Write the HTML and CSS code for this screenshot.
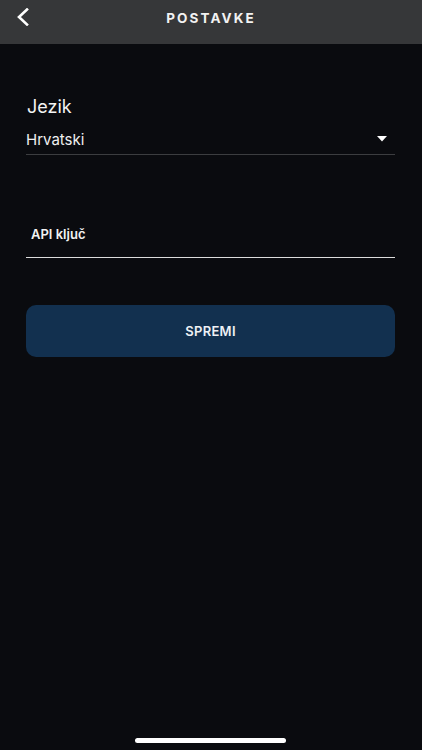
FILE: index.html
```html
<!DOCTYPE html>
<html lang="hr">
<head>
<meta charset="utf-8">
<title>Postavke</title>
<link rel="stylesheet" href="styles.css">
</head>
<body>
<div class="screen">
  <header class="topbar">
    <button class="back" aria-label="Natrag">
      <svg width="14" height="18" viewBox="0 0 14 18"><path d="M11 1.5 L3 9 L11 16.5" fill="none" stroke="#fff" stroke-width="2.6" stroke-linecap="square" stroke-linejoin="miter"/></svg>
    </button>
    <h1 class="title">POSTAVKE</h1>
  </header>
  <main class="content">
    <div class="field lang">
      <label class="label">Jezik</label>
      <div class="select">
        <span class="value">Hrvatski</span>
        <svg class="caret" width="10" height="6" viewBox="0 0 10 6"><path d="M0 0 H10 L5 5.5 Z" fill="#fff"/></svg>
      </div>
    </div>
    <div class="field api">
      <span class="placeholder">API ključ</span>
    </div>
    <button class="save">SPREMI</button>
  </main>
  <div class="home-indicator"></div>
</div>
</body>
</html>
```
FILE: styles.css
```css
* { box-sizing: border-box; }
html, body {
  margin: 0;
  padding: 0;
  background: #0a0b0f;
}
body {
  font-family: "Inter", "Liberation Sans", sans-serif;
  color: #fff;
}
.screen {
  width: 422px;
  height: 750px;
  display: flex;
  flex-direction: column;
  position: relative;
  overflow: hidden;
}
.topbar {
  height: 44px;
  background: #363739;
  display: flex;
  align-items: center;
  justify-content: center;
  position: relative;
}
.back {
  position: absolute;
  left: 13px;
  top: 7px;
  width: 20px;
  height: 20px;
  padding: 0;
  border: 0;
  background: none;
  display: flex;
  align-items: center;
  justify-content: center;
}
.title {
  margin: 0 0 9px 0;
  font-size: 13.5px;
  font-weight: 700;
  letter-spacing: 2.1px;
  color: #f2f2f2;
}
.content {
  padding: 52px 27px 0 26px;
  display: flex;
  flex-direction: column;
}
.field.lang {
  display: flex;
  flex-direction: column;
}
.label {
  font-size: 18px;
  font-weight: 400;
  padding-left: 1px;
  line-height: 22px;
  color: #f4f4f4;
}
.select {
  margin-top: 14px;
  height: 23px;
  border-bottom: 1px solid #3c3d40;
  display: flex;
  align-items: flex-start;
  justify-content: space-between;
  padding-right: 8px;
}
.value {
  font-size: 15px;
  line-height: 16px;
  color: #f0f0f0;
}
.caret {
  margin-top: 4px;
}
.field.api {
  margin-top: 68px;
  height: 35px;
  border-bottom: 1.5px solid #dcdcdc;
  padding-left: 5px;
}
.placeholder {
  font-size: 13px;
  font-weight: 600;
  line-height: 16px;
  color: #f2f2f2;
}
.save {
  margin-top: 47px;
  height: 52px;
  border: 0;
  border-radius: 10px;
  background: #12304f;
  color: #eef1f5;
  font-family: "Inter", "Liberation Sans", sans-serif;
  font-size: 13px;
  font-weight: 600;
  letter-spacing: 0.3px;
}
.home-indicator {
  position: absolute;
  left: 135px;
  bottom: 7px;
  width: 151px;
  height: 5px;
  border-radius: 3px;
  background: #fff;
}
```
